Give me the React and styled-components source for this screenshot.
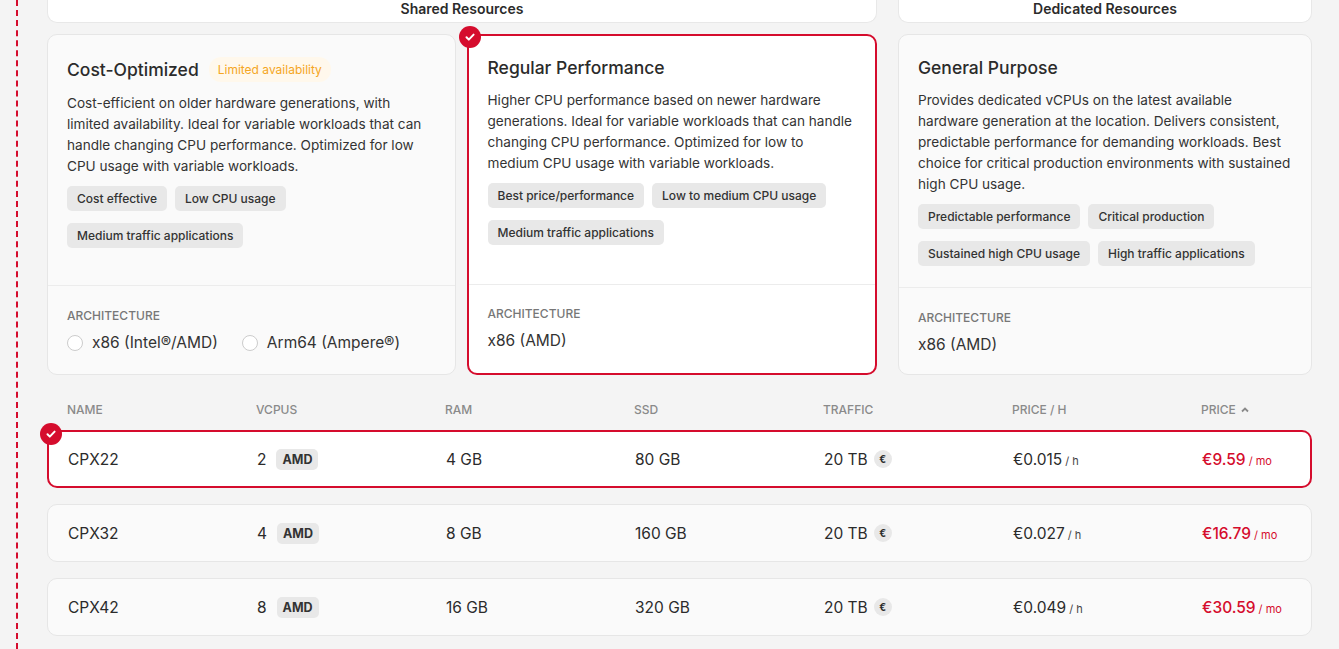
import React from "react";
import styled, { createGlobalStyle, css } from "styled-components";

const Global = createGlobalStyle`
  html,body{margin:0;padding:0;background:#f4f4f4;font-family:Inter,"Noto Sans",sans-serif;color:#2b2b2b;}
`;
const Page = styled.div`
  position:relative;width:1339px;height:649px;overflow:hidden;
  padding:0 27px 0 47px;box-sizing:border-box;
`;
const Dashed = styled.div`
  position:absolute;left:16px;top:0;bottom:0;border-left:2px dashed #d50c2d;
`;
const Groups = styled.div`display:flex;gap:21px;margin-top:-13px;`;
const Group = styled.div`display:flex;flex-direction:column;gap:11px;flex:${p=>p.$f};`;
const GroupHead = styled.div`
  background:#fff;border:1px solid #e8e8e8;border-top:none;border-radius:0 0 10px 10px;
  height:36px;display:flex;align-items:flex-end;justify-content:center;padding-bottom:5px;box-sizing:border-box;
  font-size:14px;font-weight:600;color:#2b2b2b;
`;
const Cards = styled.div`display:flex;gap:11px;`;
const Card = styled.div`
  position:relative;flex:1;height:341px;box-sizing:border-box;border-radius:10px;
  background:${p=>p.$sel?"#fff":"#fafafa"};
  border:${p=>p.$sel?"2px solid #d50c2d":"1px solid #e6e6e6"};
  display:flex;flex-direction:column;
`;
const Top = styled.div`flex:1;padding:${p=>p.$sel?"20px 19px":"21px 19px"};`;
const TitleRow = styled.div`display:flex;align-items:center;gap:10px;margin-bottom:${p=>p.$big?"11px":"10px"};${p=>p.$big&&css`margin-top:1px;`}`;
const Title = styled.div`font-size:17.5px;font-weight:500;color:#2b2b2b;line-height:24px;`;
const Warn = styled.span`background:#fff8ec;color:#f5a623;font-size:12px;border-radius:12px;padding:5px 9px;`;
const Desc = styled.p`margin:0 0 9px;font-size:13.6px;line-height:21px;color:#333;`;
const Tags = styled.div`display:flex;flex-wrap:wrap;gap:12px 8px;`;
const Tag = styled.span`background:#e8e8e8;border-radius:5px;padding:5px 10px;font-size:12px;font-weight:500;color:#333;`;
const Bottom = styled.div`border-top:1px solid #ececec;height:89px;box-sizing:border-box;padding:${p=>p.$sel?"21px 19px":"22px 19px"};`;
const Label = styled.div`font-size:12px;color:#777;font-weight:500;margin-bottom:10px;`;
const Archs = styled.div`display:flex;gap:24px;font-size:15.5px;color:#333;`;
const Arch = styled.label`display:flex;align-items:center;gap:9px;`;
const Radio = styled.span`width:14px;height:14px;border:1px solid #ccc;border-radius:50%;background:#fff;`;
const Check = styled.span`
  position:absolute;left:${p=>p.$l}px;top:${p=>p.$t}px;width:22px;height:22px;border-radius:50%;background:#d50c2d;
  display:flex;align-items:center;justify-content:center;
`;
const Grid = css`display:grid;grid-template-columns:repeat(6,189px) 1fr;align-items:center;`;
const THead = styled.div`${Grid};padding:14px 20px 0;height:55px;box-sizing:border-box;font-size:12px;font-weight:500;color:#8a8a8a;`;
const Rows = styled.div`display:flex;flex-direction:column;gap:16px;`;
const Row = styled.div`
  ${Grid};position:relative;height:58px;box-sizing:border-box;border-radius:10px;background:${p=>p.$sel?"#fff":"#fafafa"};
  border:${p=>p.$sel?"2px solid #d50c2d":"1px solid #e6e6e6"};padding:0 ${p=>p.$sel?19:20}px;font-size:15.5px;color:#2b2b2b;
`;
const Cell = styled.div`display:flex;align-items:center;gap:10px;`;
const Amd = styled.span`background:#e8e8e8;border-radius:5px;padding:3px 6px;font-size:12.5px;font-weight:700;color:#333;`;
const Euro = styled.span`width:18px;height:18px;border-radius:50%;background:#e8e8e8;font-size:10px;font-weight:700;display:inline-flex;align-items:center;justify-content:center;margin-left:-4px;`;
const Unit = styled.span`font-size:11px;margin-left:3px;color:${p=>p.$red?"#d50c2d":"#444"};`;
const Price = styled.span`color:#d50c2d;font-weight:500;`;

const Tick = () => (
  <svg width="12" height="12" viewBox="0 0 12 12"><path d="M2.5 6.3l2.3 2.3 4.8-5" stroke="#fff" strokeWidth="2" fill="none" strokeLinecap="round" strokeLinejoin="round"/></svg>
);

const rows = [
  ["CPX22","2","4 GB","80 GB","€0.015","€9.59",true],
  ["CPX32","4","8 GB","160 GB","€0.027","€16.79"],
  ["CPX42","8","16 GB","320 GB","€0.049","€30.59"],
];

export default function App(){
  return (<>
    <Global/>
    <Page>
      <Dashed/>
      <Groups>
        <Group $f="830">
          <GroupHead>Shared Resources</GroupHead>
          <Cards>
            <Card>
              <Top>
                <TitleRow $big><Title>Cost-Optimized</Title><Warn>Limited availability</Warn></TitleRow>
                <Desc>Cost-efficient on older hardware generations, with limited availability. Ideal for variable workloads that can handle changing CPU performance. Optimized for low CPU usage with variable workloads.</Desc>
                <Tags><Tag>Cost effective</Tag><Tag>Low CPU usage</Tag><Tag>Medium traffic applications</Tag></Tags>
              </Top>
              <Bottom>
                <Label>ARCHITECTURE</Label>
                <Archs><Arch><Radio/>x86 (Intel®/AMD)</Arch><Arch><Radio/>Arm64 (Ampere®)</Arch></Archs>
              </Bottom>
            </Card>
            <Card $sel>
              <Check $l={-10} $t={-10}><Tick/></Check>
              <Top $sel>
                <TitleRow><Title>Regular Performance</Title></TitleRow>
                <Desc>Higher CPU performance based on newer hardware generations. Ideal for variable workloads that can handle changing CPU performance. Optimized for low to medium CPU usage with variable workloads.</Desc>
                <Tags><Tag>Best price/performance</Tag><Tag>Low to medium CPU usage</Tag><Tag>Medium traffic applications</Tag></Tags>
              </Top>
              <Bottom $sel>
                <Label>ARCHITECTURE</Label>
                <Archs>x86 (AMD)</Archs>
              </Bottom>
            </Card>
          </Cards>
        </Group>
        <Group $f="414">
          <GroupHead>Dedicated Resources</GroupHead>
          <Cards>
            <Card>
              <Top>
                <TitleRow><Title>General Purpose</Title></TitleRow>
                <Desc>Provides dedicated vCPUs on the latest available hardware generation at the location. Delivers consistent, predictable performance for demanding workloads. Best choice for critical production environments with sustained high CPU usage.</Desc>
                <Tags><Tag>Predictable performance</Tag><Tag>Critical production</Tag><Tag>Sustained high CPU usage</Tag><Tag>High traffic applications</Tag></Tags>
              </Top>
              <Bottom>
                <Label>ARCHITECTURE</Label>
                <Archs>x86 (AMD)</Archs>
              </Bottom>
            </Card>
          </Cards>
        </Group>
      </Groups>
      <THead>
        <span>NAME</span><span>VCPUS</span><span>RAM</span><span>SSD</span><span>TRAFFIC</span><span>PRICE / H</span>
        <Cell style={{gap:4}}>PRICE <svg width="10" height="10" viewBox="0 0 10 10"><path d="M2 6.5l3-3 3 3" stroke="#8a8a8a" strokeWidth="1.8" fill="none"/></svg></Cell>
      </THead>
      <Rows>
        {rows.map(r=>(
          <Row key={r[0]} $sel={r[6]}>
            {r[6] && <Check $l={-9} $t={-9}><Tick/></Check>}
            <Cell>{r[0]}</Cell>
            <Cell>{r[1]}<Amd>AMD</Amd></Cell>
            <Cell>{r[2]}</Cell>
            <Cell>{r[3]}</Cell>
            <Cell>20 TB <Euro>€</Euro></Cell>
            <Cell><span>{r[4]}<Unit>/ h</Unit></span></Cell>
            <Cell><span><Price>{r[5]}</Price><Unit $red>/ mo</Unit></span></Cell>
          </Row>
        ))}
      </Rows>
    </Page>
  </>);
}
